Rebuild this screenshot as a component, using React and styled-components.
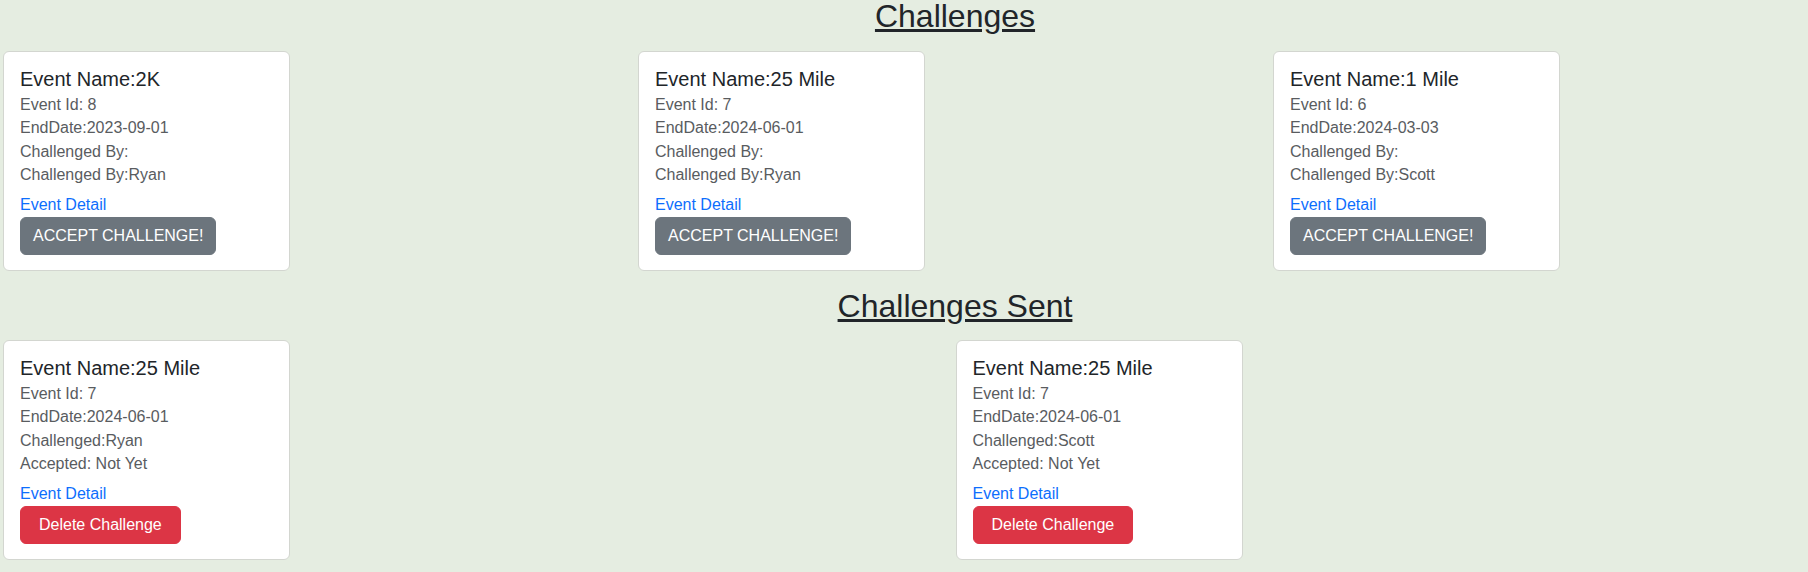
import React from "react";
import styled, { createGlobalStyle } from "styled-components";

const GlobalStyle = createGlobalStyle`
  html, body {
    margin: 0;
    padding: 0;
    background: #e5ede1;
    overflow: hidden;
  }
  body {
    font-family: "Liberation Sans", Arial, Helvetica, sans-serif;
    color: #212529;
  }
  * { box-sizing: border-box; }
`;

const Page = styled.div`
  width: 1905px;
  display: flex;
  flex-direction: column;
`;

const Section = styled.section`
  display: flex;
  flex-direction: column;
  margin-top: ${(p) => (p.$first ? "0" : "19px")};
`;

const SectionTitle = styled.h2`
  margin: 0;
  padding-left: 5px;
  font-size: 32px;
  line-height: 32px;
  font-weight: 400;
  text-align: center;
  text-decoration: underline;
  color: #212529;
`;

const CardGrid = styled.div`
  display: grid;
  grid-template-columns: repeat(${(p) => p.$cols}, 1fr);
  margin-top: ${(p) => p.$top}px;
`;

const Cell = styled.div`
  padding-left: 3px;
`;

const Card = styled.div`
  width: 287px;
  background: #ffffff;
  border: 1px solid #d3d6d0;
  border-radius: 6px;
  padding: 15px 16px;
  display: flex;
  flex-direction: column;
  align-items: flex-start;
`;

const EventName = styled.h5`
  margin: 0;
  font-size: 20px;
  line-height: 24px;
  font-weight: 400;
  color: #212529;
`;

const Details = styled.div`
  margin-top: 2px;
  display: flex;
  flex-direction: column;
`;

const DetailLine = styled.div`
  font-size: 16px;
  line-height: 23.3px;
  color: #595c5f;
`;

const DetailLink = styled.a`
  margin-top: 6.8px;
  font-size: 16px;
  line-height: 24px;
  color: #0d6efd;
  text-decoration: none;
  cursor: pointer;
`;

const ActionButton = styled.button`
  height: 38px;
  padding: 0 ${(p) => (p.$variant === "danger" ? "18px" : "12px")};
  border: 1px solid ${(p) => (p.$variant === "danger" ? "#dc3545" : "#6c757d")};
  background: ${(p) => (p.$variant === "danger" ? "#dc3545" : "#6c757d")};
  color: #ffffff;
  border-radius: 6px;
  font-family: inherit;
  font-size: 16px;
  line-height: 24px;
  text-transform: ${(p) => (p.$upper ? "uppercase" : "none")};
  cursor: pointer;
`;

const received = [
  { name: "2K", id: 8, end: "2023-09-01", by: "Ryan" },
  { name: "25 Mile", id: 7, end: "2024-06-01", by: "Ryan" },
  { name: "1 Mile", id: 6, end: "2024-03-03", by: "Scott" },
];

const sent = [
  { name: "25 Mile", id: 7, end: "2024-06-01", who: "Ryan" },
  { name: "25 Mile", id: 7, end: "2024-06-01", who: "Scott" },
];

export default function App() {
  return (
    <>
      <GlobalStyle />
      <Page>
        <Section $first>
          <SectionTitle>Challenges</SectionTitle>
          <CardGrid $cols={3} $top={19}>
            {received.map((c, i) => (
              <Cell key={i}>
                <Card>
                  <EventName>Event Name:{c.name}</EventName>
                  <Details>
                    <DetailLine>Event Id: {c.id}</DetailLine>
                    <DetailLine>EndDate:{c.end}</DetailLine>
                    <DetailLine>Challenged By:</DetailLine>
                    <DetailLine>Challenged By:{c.by}</DetailLine>
                  </Details>
                  <DetailLink>Event Detail</DetailLink>
                  <ActionButton $upper>Accept Challenge!</ActionButton>
                </Card>
              </Cell>
            ))}
          </CardGrid>
        </Section>
        <Section>
          <SectionTitle>Challenges Sent</SectionTitle>
          <CardGrid $cols={2} $top={18}>
            {sent.map((c, i) => (
              <Cell key={i}>
                <Card>
                  <EventName>Event Name:{c.name}</EventName>
                  <Details>
                    <DetailLine>Event Id: {c.id}</DetailLine>
                    <DetailLine>EndDate:{c.end}</DetailLine>
                    <DetailLine>Challenged:{c.who}</DetailLine>
                    <DetailLine>Accepted: Not Yet</DetailLine>
                  </Details>
                  <DetailLink>Event Detail</DetailLink>
                  <ActionButton $variant="danger">Delete Challenge</ActionButton>
                </Card>
              </Cell>
            ))}
          </CardGrid>
        </Section>
      </Page>
    </>
  );
}
